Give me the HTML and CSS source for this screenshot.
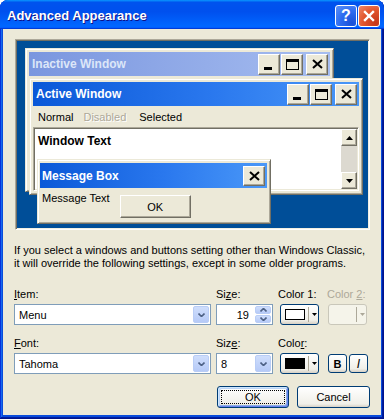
FILE: index.html
```html
<!DOCTYPE HTML>
<html>
<head>
    <title>Advanced Appearance</title>
    <meta charset="utf-8">
    <link rel="stylesheet" href="styles.css">
</head>
<body>
    <div class="dialog">
        <div class="titleBar">
            <span class="titleText">Advanced Appearance</span>
            <span class="capHelp">?</span>
            <span class="capClose">
                <svg width="12" height="12" viewBox="0 0 12 12"><path d="M2 2L10 10M10 2L2 10" stroke="#fff" stroke-width="2.4" stroke-linecap="square"/></svg>
            </span>
        </div>
        <div class="client">
            <div class="preview">
                <div class="desk">
                    <div class="win winInactive">
                        <div class="cap capInactive">
                            <span class="capTitle">Inactive Window</span>
                            <span class="cbtn cbtnMin"><svg width="8" height="3"><rect width="8" height="3"/></svg></span>
                            <span class="cbtn"><svg width="13" height="11"><path d="M0 0H13V11H0Z M1 3V10H12V3Z" fill-rule="evenodd"/></svg></span>
                            <span class="cbtn cbtnClose"><svg width="11" height="10"><path d="M1 1L10 9M10 1L1 9" stroke="#000" stroke-width="2"/></svg></span>
                        </div>
                    </div>
                    <div class="win winActive">
                        <div class="cap capActive">
                            <span class="capTitle">Active Window</span>
                            <span class="cbtn cbtnMin"><svg width="8" height="3"><rect width="8" height="3"/></svg></span>
                            <span class="cbtn"><svg width="13" height="11"><path d="M0 0H13V11H0Z M1 3V10H12V3Z" fill-rule="evenodd"/></svg></span>
                            <span class="cbtn cbtnClose"><svg width="11" height="10"><path d="M1 1L10 9M10 1L1 9" stroke="#000" stroke-width="2"/></svg></span>
                        </div>
                        <div class="menuBar">
                            <span class="menuItem">Normal</span>
                            <span class="menuItem menuDisabled">Disabled</span>
                            <span class="menuItem menuSelected">Selected</span>
                        </div>
                        <div class="winClient">
                            <div class="winText">Window Text</div>
                            <div class="scrollBar">
                                <span class="sbtn"><svg width="7" height="4"><path d="M3.5 0L7 4H0Z"/></svg></span>
                                <span class="sbTrack"></span>
                                <span class="sbtn"><svg width="7" height="4"><path d="M0 0H7L3.5 4Z"/></svg></span>
                            </div>
                        </div>
                    </div>
                    <div class="win winMsg">
                        <div class="cap capActive capMsg">
                            <span class="capTitle">Message Box</span>
                            <span class="cbtn cbtnClose cbtnMsg"><svg width="11" height="10"><path d="M1 1L10 9M10 1L1 9" stroke="#000" stroke-width="2"/></svg></span>
                        </div>
                        <div class="msgBody">
                            <span class="msgText">Message Text</span>
                            <span class="msgOk">OK</span>
                        </div>
                    </div>
                </div>
            </div>

            <p class="note">If you select a windows and buttons setting other than Windows Classic,<br>it will override the following settings, except in some older programs.</p>

            <div class="form">
                <div class="field">
                    <label><u>I</u>tem:</label>
                    <div class="combo">
                        <span class="comboText">Menu</span>
                        <span class="dropBtn"><svg width="7" height="4"><path d="M0.5 0.5L3.5 3.5L6.5 0.5" fill="none" stroke="#4D6185" stroke-width="1.6"/></svg></span>
                    </div>
                </div>
                <div class="field">
                    <label>Si<u>z</u>e:</label>
                    <div class="combo spin">
                        <span class="comboText spinText">19</span>
                        <span class="spinBtns">
                            <span class="spinBtn"><svg width="7" height="4"><path d="M0.5 3.5L3.5 0.5L6.5 3.5" fill="none" stroke="#4D6185" stroke-width="1.6"/></svg></span>
                            <span class="spinBtn"><svg width="7" height="4"><path d="M0.5 0.5L3.5 3.5L6.5 0.5" fill="none" stroke="#4D6185" stroke-width="1.6"/></svg></span>
                        </span>
                    </div>
                </div>
                <div class="field">
                    <label>Color 1:</label>
                    <div class="colorBtn">
                        <span class="swatch swatchWhite"></span>
                        <span class="colorSep"></span>
                        <svg width="5" height="3"><path d="M0 0H5L2.5 3Z"/></svg>
                    </div>
                </div>
                <div class="field">
                    <label class="labelDisabled">Color <u>2</u>:</label>
                    <div class="colorBtn colorBtnDisabled">
                        <span class="swatch swatchNone"></span>
                        <span class="colorSep"></span>
                        <svg width="5" height="3"><path d="M0 0H5L2.5 3Z" fill="#ACA899"/></svg>
                    </div>
                </div>

                <div class="field">
                    <label><u>F</u>ont:</label>
                    <div class="combo">
                        <span class="comboText">Tahoma</span>
                        <span class="dropBtn"><svg width="7" height="4"><path d="M0.5 0.5L3.5 3.5L6.5 0.5" fill="none" stroke="#4D6185" stroke-width="1.6"/></svg></span>
                    </div>
                </div>
                <div class="field">
                    <label>Siz<u>e</u>:</label>
                    <div class="combo">
                        <span class="comboText">8</span>
                        <span class="dropBtn"><svg width="7" height="4"><path d="M0.5 0.5L3.5 3.5L6.5 0.5" fill="none" stroke="#4D6185" stroke-width="1.6"/></svg></span>
                    </div>
                </div>
                <div class="field">
                    <label>Colo<u>r</u>:</label>
                    <div class="colorBtn">
                        <span class="swatch swatchBlack"></span>
                        <span class="colorSep"></span>
                        <svg width="5" height="3"><path d="M0 0H5L2.5 3Z"/></svg>
                    </div>
                </div>
                <div class="field">
                    <label>&nbsp;</label>
                    <div class="styleBtns">
                        <span class="styleBtn styleBold">B</span>
                        <span class="styleBtn styleItalic">I</span>
                    </div>
                </div>
            </div>

            <div class="actions">
                <span class="btn btnDefault"><span class="focusRect">OK</span></span>
                <span class="btn btnCancel">Cancel</span>
            </div>
        </div>
    </div>
</body>
</html>
```

FILE: styles.css
```css
* {
    box-sizing: border-box;
}

body {
    margin: 0;
    padding: 0;
    background: #fff;
    font-family: "Liberation Sans", Arial, sans-serif;
    font-size: 11px;
    color: #000;
}

u {
    text-decoration: underline;
    text-underline-offset: 1px;
}

/* outer XP window */
.dialog {
    width: 384px;
    height: 419px;
    padding: 0 3px 4px 3px;
    border-radius: 8px 8px 0 0;
    background: #0A4CDB;
    box-shadow: inset -1px -1px #00138C, inset 1px 1px #0831D9, inset -2px -2px #001EA0, inset 2px 2px #166AEE;
    display: flex;
    flex-direction: column;
}

.titleBar {
    height: 29px;
    margin: 0 -3px;
    padding: 0 4px 0 7px;
    border-radius: 8px 8px 0 0;
    background: linear-gradient(180deg, #0997FF, #0053EE 8%, #0050EE 40%, #0066FF 88%, #0066FF 93%, #005BFF 95%, #003DD7 96%, #003DD7);
    display: flex;
    align-items: center;
}

.titleText {
    flex: 1;
    color: #fff;
    font-weight: bold;
    font-size: 13px;
    text-shadow: 1px 1px #0F1089;
    padding-top: 1px;
}

.capHelp, .capClose {
    width: 22px;
    height: 22px;
    border: 1px solid #fff;
    border-radius: 3px;
    display: flex;
    align-items: center;
    justify-content: center;
    color: #fff;
    font-weight: bold;
    font-size: 16px;
    margin-top: 3px;
}

.capHelp {
    background: radial-gradient(circle at 80% 85%, #1A4FD6 0%, #2D6CF0 50%, #5E92F8 100%);
    margin-right: 1px;
}

.capClose {
    background: radial-gradient(circle at 85% 85%, #C4361A 0%, #E2562E 55%, #EE8A6A 100%);
}

.client {
    flex: 1;
    background: #ECE9D8;
    padding: 10px 11px 0 12px;
}

/* preview of window styles */
.preview {
    width: 355px;
    height: 191px;
    border: 1px solid;
    border-color: #ACA899 #fff #fff #ACA899;
    box-shadow: inset 1px 1px #716F64, inset -1px -1px #F1EFE2;
    padding: 1px;
}

.desk {
    position: relative;
    width: 100%;
    height: 100%;
    background: #004E98;
}

.win {
    position: absolute;
    background: #ECE9D8;
    border: 1px solid;
    border-color: #ECE9D8 #716F64 #716F64 #ECE9D8;
    box-shadow: inset 1px 1px #fff, inset -1px -1px #ACA899;
    padding: 3px;
    display: flex;
    flex-direction: column;
}

.winInactive {
    left: 8px;
    top: 7px;
    width: 309px;
    height: 144px;
}

.winActive {
    left: 12px;
    top: 37px;
    width: 334px;
    height: 117px;
}

.winMsg {
    left: 20px;
    top: 118px;
    width: 234px;
    height: 65px;
    padding-left: 2px;
}

.cap {
    height: 24px;
    display: flex;
    align-items: center;
    padding: 0 2px 0 3px;
    font-weight: bold;
    font-size: 12px;
    color: #fff;
}

.capInactive {
    background: linear-gradient(90deg, #7A96DF, #A6BDF0);
    color: #DCE6F8;
}

.capActive {
    background: linear-gradient(90deg, #0A58D8, #2A78EE 55%, #4A98F8);
}

.capMsg {
    height: 25px;
    padding-left: 2px;
}

.capTitle {
    flex: 1;
}

.cbtn {
    width: 22px;
    height: 21px;
    margin-left: 1px;
    background: #ECE9D8;
    border: 1px solid;
    border-color: #fff #716F64 #716F64 #fff;
    box-shadow: inset -1px -1px #ACA899;
    display: flex;
    align-items: center;
    justify-content: center;
}

.cbtnMin {
    align-items: flex-end;
    padding-bottom: 4px;
    justify-content: flex-start;
    padding-left: 5px;
}

.cbtnClose {
    margin-left: 3px;
}

.cbtnMsg {
    height: 20px;
}

.menuBar {
    height: 21px;
    display: flex;
    align-items: center;
    padding-left: 5px;
}

.menuItem {
    margin-right: 10px;
}

.menuDisabled {
    color: #ACA899;
    text-shadow: 1px 1px #fff;
    margin-right: 13px;
}

.winClient {
    flex: 1;
    display: flex;
    background: #fff;
    border: 1px solid;
    border-color: #ACA899 #fff #fff #ACA899;
    box-shadow: inset 1px 1px #716F64, inset -1px -1px #ECE9D8;
    padding: 1px;
}

.winText {
    flex: 1;
    font-weight: bold;
    font-size: 12px;
    padding: 5px 0 0 3px;
}

.scrollBar {
    width: 16px;
    display: flex;
    flex-direction: column;
    background: #DCD9D0;
}

.sbtn {
    height: 17px;
    background: #ECE9D8;
    border: 1px solid;
    border-color: #fff #716F64 #716F64 #fff;
    box-shadow: inset -1px -1px #ACA899;
    display: flex;
    align-items: center;
    justify-content: center;
}

.sbTrack {
    flex: 1;
}

.msgBody {
    flex: 1;
    display: flex;
    align-items: flex-start;
    padding: 4px 0 0 2px;
}

.msgOk {
    width: 71px;
    height: 23px;
    margin: 3px 0 0 10px;
    border: 1px solid;
    border-color: #fff #716F64 #716F64 #fff;
    box-shadow: inset -1px -1px #ACA899;
    display: flex;
    align-items: center;
    justify-content: center;
}

/* text and settings */
.note {
    margin: 14px 0 0 -1px;
    line-height: 13px;
}

.form {
    margin: 17px 0 0 -1px;
    display: grid;
    grid-template-columns: 197px 57px 44px 41px;
    column-gap: 5px;
    row-gap: 11px;
}

.field {
    display: flex;
    flex-direction: column;
}

.field label {
    height: 14px;
    line-height: 14px;
    margin-bottom: 3px;
}

.labelDisabled {
    color: #ACA899;
}

.combo {
    height: 21px;
    border: 1px solid #7F9DB9;
    background: #fff;
    display: flex;
    align-items: center;
    padding: 1px;
}

.comboText {
    flex: 1;
    padding-left: 3px;
}

.spinText {
    text-align: right;
    padding-right: 6px;
}

.dropBtn {
    width: 16px;
    height: 17px;
    border: 1px solid #B9CDF6;
    border-radius: 2px;
    background: linear-gradient(180deg, #CFDEFC, #B6CAF7);
    display: flex;
    align-items: center;
    justify-content: center;
}

.spinBtns {
    width: 16px;
    height: 17px;
    display: flex;
    flex-direction: column;
    gap: 1px;
}

.spinBtn {
    flex: 1;
    border: 1px solid #B9CDF6;
    border-radius: 2px;
    background: linear-gradient(180deg, #CFDEFC, #B6CAF7);
    display: flex;
    align-items: center;
    justify-content: center;
}

.colorBtn {
    width: 39px;
    height: 21px;
    margin-left: 2px;
    border: 1px solid #003C74;
    border-radius: 3px;
    background: linear-gradient(180deg, #fff, #F0EFE8 80%, #D6D0C5);
    display: flex;
    align-items: center;
    padding-left: 4px;
}

.colorBtnDisabled {
    margin-left: 1px;
    border-color: #C9C7BA;
    background: #F5F4EA;
}

.swatch {
    width: 20px;
    height: 11px;
    border: 1px solid #000;
}

.swatchWhite {
    background: #fff;
}

.swatchBlack {
    background: #000;
}

.swatchNone {
    border-color: transparent;
}

.colorSep {
    width: 1px;
    height: 15px;
    margin: 0 3px 0 3px;
    background: #ACA899;
}

.styleBtns {
    display: flex;
    gap: 2px;
    margin-left: 1px;
    padding-top: 1px;
}

.styleBtn {
    width: 19px;
    height: 19px;
    border: 1px solid #003C74;
    border-radius: 3px;
    background: linear-gradient(180deg, #fff, #F0EFE8 80%, #D6D0C5);
    display: flex;
    align-items: center;
    justify-content: center;
    font-size: 11px;
}

.styleBold {
    font-weight: bold;
}

.styleItalic {
    font-style: italic;
    font-size: 12px;
}

.actions {
    margin-top: 12px;
    display: flex;
    justify-content: flex-end;
    gap: 8px;
}

.btn {
    height: 22px;
    border: 1px solid #003C74;
    border-radius: 3px;
    background: linear-gradient(180deg, #fff, #F0EFE8 85%, #D6D0C5);
    display: flex;
    align-items: center;
    justify-content: center;
}

.btnDefault {
    width: 72px;
    box-shadow: inset 1px 1px #CEE7FF, inset -1px -1px #6982EE, inset 2px 2px #BCD4F6, inset -2px -2px #89ADE4;
    padding: 3px;
}

.focusRect {
    width: 100%;
    height: 100%;
    border: 1px dotted #000;
    display: flex;
    align-items: center;
    justify-content: center;
}

.btnCancel {
    width: 73px;
}
```
